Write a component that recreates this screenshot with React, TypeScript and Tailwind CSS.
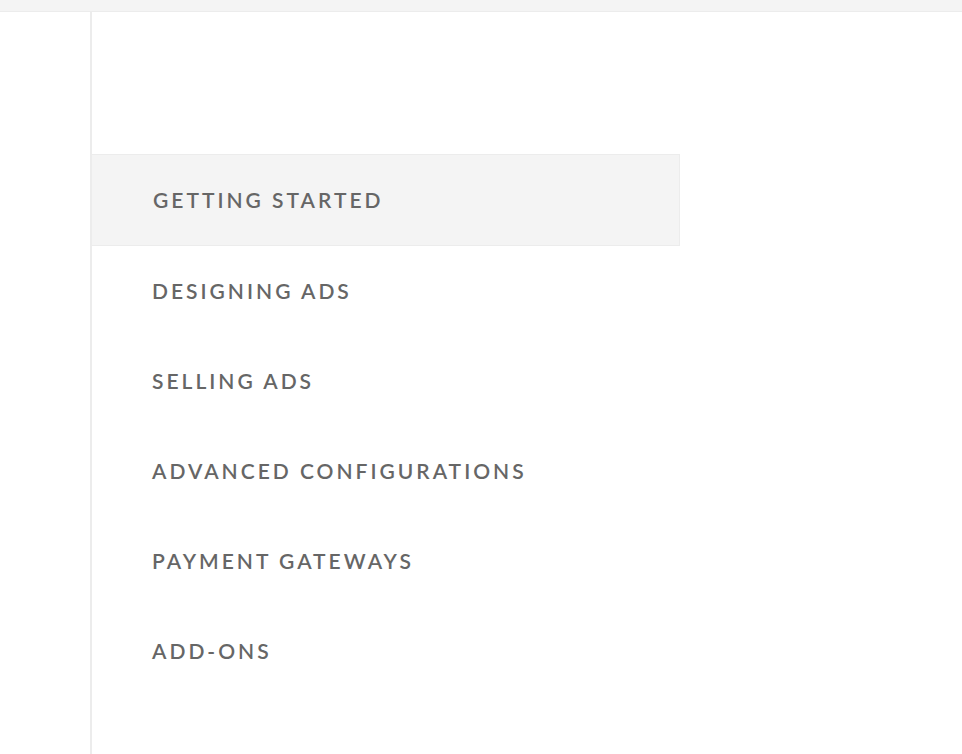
const items = [
  "Getting Started",
  "Designing Ads",
  "Selling Ads",
  "Advanced Configurations",
  "Payment Gateways",
  "Add-ons",
];

export default function App() {
  const active = 0;
  return (
    <div className="min-h-screen bg-white flex flex-col" style={{ fontFamily: "Lato, 'Liberation Sans', sans-serif" }}>
      <div className="h-[12px] shrink-0 bg-[#f4f4f4] border-b border-[#ececec]" />
      <div className="flex flex-1">
        <div className="w-[90px] shrink-0" />
        <nav className="w-[590px] border-l-2 border-[#ececec] pt-[142px]">
          <ul className="flex flex-col">
            {items.map((label, i) => (
              <li
                key={label}
                className={
                  i === active
                    ? "h-[92px] -ml-px flex items-center pl-[61px] bg-[#f4f4f4] border border-[#ececec]"
                    : "h-[90px] flex items-center pl-[60px]"
                }
              >
                <span className="text-[21px] font-semibold uppercase tracking-[3px] text-[#666666]">
                  {label}
                </span>
              </li>
            ))}
          </ul>
        </nav>
      </div>
    </div>
  );
}
